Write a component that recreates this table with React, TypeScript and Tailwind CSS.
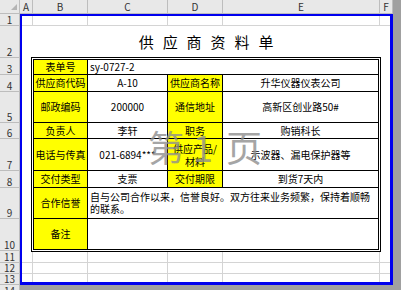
import type { ReactNode } from "react";

const COL_HEADERS = [
  { label: "A", cls: "w-[13px]" },
  { label: "B", cls: "w-[55px]" },
  { label: "C", cls: "w-[80px]" },
  { label: "D", cls: "w-[55px]" },
  { label: "E", cls: "w-[157px]" },
  { label: "F", cls: "w-[13px]" },
];

// row header heights include the 1px divider line
const ROW_HEADERS = [
  { n: 1, cls: "h-[12px]" },
  { n: 2, cls: "h-[32px]" },
  { n: 3, cls: "h-[17px]" },
  { n: 4, cls: "h-[17px]" },
  { n: 5, cls: "h-[31px]" },
  { n: 6, cls: "h-[16px]" },
  { n: 7, cls: "h-[32px]" },
  { n: 8, cls: "h-[17px]" },
  { n: 9, cls: "h-[31px]" },
  { n: 10, cls: "h-[32px]" },
  { n: 11, cls: "h-[12px]" },
  { n: 12, cls: "h-[11px]" },
  { n: 13, cls: "h-[11px]" },
  { n: 14, cls: "h-[12px]" },
];

const SHEET_COLS = ["w-[11px]", "w-[55px]", "w-[80px]", "w-[55px]", "w-[157px]", "w-[10px]"];

function GridRow({ h, line = true }: { h: string; line?: boolean }) {
  return (
    <div className={`flex ${h} ${line ? "border-b border-[#d4d4d4]" : ""}`}>
      {SHEET_COLS.map((w, i) => (
        <div
          key={i}
          className={`${w} h-full ${i < SHEET_COLS.length - 1 ? "border-r border-[#d4d4d4]" : ""}`}
        />
      ))}
    </div>
  );
}

function Label({ children, className = "" }: { children: ReactNode; className?: string }) {
  return (
    <div className={`flex items-center justify-center bg-[#ffff00] text-center ${className}`}>
      {children}
    </div>
  );
}

function Value({ children, className = "" }: { children?: ReactNode; className?: string }) {
  return <div className={`flex items-center justify-center bg-white ${className}`}>{children}</div>;
}

export default function App() {
  return (
    <div className="relative w-[401px] h-[290px] overflow-hidden bg-[#a0a0a0] text-black font-['Noto_Sans_CJK_SC','Noto_Sans',sans-serif]">
      {/* column headers */}
      <div className="flex h-[14px]">
        <div className="relative w-[20px] h-full bg-[#e8e8e8] border-r border-b border-[#bdbdbd]">
          <svg className="absolute left-[11px] top-[4px]" width="6" height="6" viewBox="0 0 6 6">
            <polygon points="6,0 6,6 0,6" fill="#b4b4b4" />
          </svg>
        </div>
        {COL_HEADERS.map((c) => (
          <div
            key={c.label}
            className={`${c.cls} h-full flex items-center justify-center bg-[#e8e8e8] border-r border-b border-[#bdbdbd] text-[10px] leading-none text-[#333]`}
          >
            {c.label}
          </div>
        ))}
      </div>

      <div className="flex">
        {/* row headers */}
        <div className="flex flex-col w-[20px]">
          {ROW_HEADERS.map((r) => (
            <div
              key={r.n}
              className={`${r.cls} flex items-end justify-center bg-[#e8e8e8] border-r border-b border-[#bdbdbd] text-[10px] leading-none text-[#333]`}
            >
              {r.n}
            </div>
          ))}
        </div>

        {/* print area */}
        <div className="w-[373px] h-[271px] flex flex-col bg-white border-t-2 border-l-2 border-r-[3px] border-b-[3px] border-[#0000ee]">
          <GridRow h="h-[10px]" />

          {/* title */}
          <div className="h-[31px] flex items-center justify-center pl-[3px] text-[15px] leading-none tracking-[2.8px]">
            供 应 商 资 料 单
          </div>

          {/* supplier table */}
          <div className="ml-[9px] w-[350px] h-[195px] border-[3px] border-double border-black bg-white">
            <div className="grid h-full grid-cols-[53px_79px_54px_155px] grid-rows-[14px_16px_30px_15px_31px_16px_30px_30px] gap-px bg-black text-[10px] leading-none">
              <Label>表单号</Label>
              <Value className="col-span-3 !justify-start pl-[2px]">sy-0727-2</Value>

              <Label>供应商代码</Label>
              <Value>A-10</Value>
              <Label>供应商名称</Label>
              <Value>升华仪器仪表公司</Value>

              <Label>邮政编码</Label>
              <Value>200000</Value>
              <Label>通信地址</Label>
              <Value>高新区创业路50#</Value>

              <Label>负责人</Label>
              <Value>李轩</Value>
              <Label>职务</Label>
              <Value>购销科长</Value>

              <Label>电话与传真</Label>
              <Value>021-6894***</Value>
              <Label className="leading-[13px]">
                供应产品/
                <br />
                材料
              </Label>
              <Value>示波器、漏电保护器等</Value>

              <Label>交付类型</Label>
              <Value>支票</Value>
              <Label>交付期限</Label>
              <Value>到货7天内</Value>

              <Label>合作信誉</Label>
              <Value className="col-span-3 !justify-start pl-[2px] leading-[12px]">
                <span>
                  自与公司合作以来，信誉良好。双方往来业务频繁，保持着顺畅
                  <br />
                  的联系。
                </span>
              </Value>

              <Label>备注</Label>
              <Value className="col-span-3" />
            </div>
          </div>

          <GridRow h="h-[11px]" />
          <GridRow h="h-[11px]" />
          <GridRow h="h-[8px]" line={false} />
        </div>
      </div>

      {/* page watermark */}
      <div className="pointer-events-none absolute left-[148px] top-[128px] flex items-center gap-[9px] text-[36px] leading-none text-[#8f8f8f] opacity-80">
        <span>第</span>
        <span>1</span>
        <span className="ml-[4px]">页</span>
      </div>
    </div>
  );
}
